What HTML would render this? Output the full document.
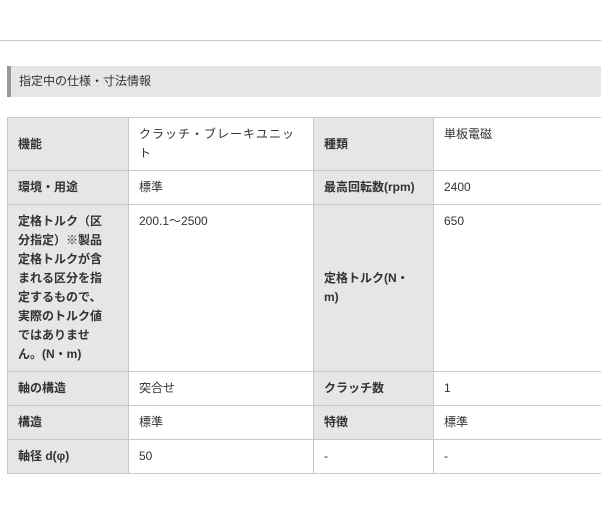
<!DOCTYPE html>
<html><head><meta charset="utf-8"><style>
body{margin:0;background:#fff;font-family:"Liberation Sans","Noto Sans CJK JP",sans-serif;font-size:12px;color:#333;}
.line{position:absolute;left:0;top:40px;width:601px;height:1px;background:#c8c8c8;}
.hd{position:absolute;left:7px;top:66px;width:594px;height:31px;background:#e6e6e6;box-sizing:border-box;border-left:4px solid #999;padding-left:8px;line-height:31px;font-size:12px;color:#333;}
table{position:absolute;left:7px;top:117px;border-collapse:collapse;width:600px;table-layout:fixed;}
td{border:1px solid #c8c8c8;padding:7px 10px 7px;line-height:19px;vertical-align:top;}
td.l{background:#e6e6e6;font-weight:bold;vertical-align:middle;}
</style></head><body>
<div class="line"></div>
<div class="hd">指定中の仕様・寸法情報</div>
<table>
<col style="width:121px"><col style="width:185px"><col style="width:120px"><col>
<tr><td class="l">機能</td><td style="letter-spacing:1px;white-space:nowrap">クラッチ・ブレーキユニッ<br>ト</td><td class="l">種類</td><td>単板電磁</td></tr>
<tr><td class="l">環境・用途</td><td>標準</td><td class="l">最高回転数(rpm)</td><td>2400</td></tr>
<tr><td class="l">定格トルク（区<br>分指定）※製品<br>定格トルクが含<br>まれる区分を指<br>定するもので、<br>実際のトルク値<br>ではありませ<br>ん。(N・m)</td><td>200.1～2500</td><td class="l">定格トルク(N・<br>m)</td><td>650</td></tr>
<tr><td class="l">軸の構造</td><td>突合せ</td><td class="l">クラッチ数</td><td>1</td></tr>
<tr><td class="l">構造</td><td>標準</td><td class="l">特徴</td><td>標準</td></tr>
<tr><td class="l">軸径 d(φ)</td><td>50</td><td>-</td><td>-</td></tr>
</table>
</body></html>
